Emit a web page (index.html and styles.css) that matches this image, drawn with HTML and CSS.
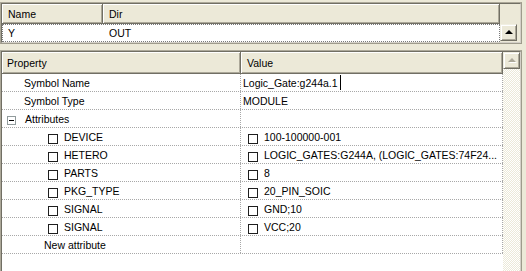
FILE: index.html
```html
<!DOCTYPE html>
<html>
<head>
<meta charset="utf-8">
<link rel="stylesheet" href="styles.css">
</head>
<body>
<div class="panel top">
  <div class="panel-in">
    <div class="list">
      <div class="hdr">
        <div class="hc name-col">Name</div>
        <div class="hc dir-col">Dir</div>
      </div>
      <div class="trow focus">
        <div class="name-col cell">Y</div>
        <div class="cell">OUT</div>
      </div>
    </div>
    <div class="vscroll short">
      <div class="sbtn"><span class="tri"></span></div>
    </div>
  </div>
</div>

<div class="panel bottom">
  <div class="panel-in">
    <div class="list">
      <div class="hdr tall">
        <div class="hc prop-col">Property</div>
        <div class="hc val-col">Value</div>
      </div>
      <div class="r">
        <div class="p ind1">Symbol Name</div>
        <div class="v edit">Logic_Gate:g244a.1<span class="caret"></span></div>
      </div>
      <div class="r">
        <div class="p ind1">Symbol Type</div>
        <div class="v">MODULE</div>
      </div>
      <div class="r">
        <div class="p ind0"><span class="minus"></span>Attributes</div>
        <div class="v"></div>
      </div>
      <div class="r">
        <div class="p ind2"><span class="chk"></span>DEVICE</div>
        <div class="v vchk"><span class="chk"></span>100-100000-001</div>
      </div>
      <div class="r">
        <div class="p ind2"><span class="chk"></span>HETERO</div>
        <div class="v vchk"><span class="chk"></span>LOGIC_GATES:G244A, (LOGIC_GATES:74F24...</div>
      </div>
      <div class="r">
        <div class="p ind2"><span class="chk"></span>PARTS</div>
        <div class="v vchk"><span class="chk"></span>8</div>
      </div>
      <div class="r">
        <div class="p ind2"><span class="chk"></span>PKG_TYPE</div>
        <div class="v vchk"><span class="chk"></span>20_PIN_SOIC</div>
      </div>
      <div class="r">
        <div class="p ind2"><span class="chk"></span>SIGNAL</div>
        <div class="v vchk"><span class="chk"></span>GND;10</div>
      </div>
      <div class="r">
        <div class="p ind2"><span class="chk"></span>SIGNAL</div>
        <div class="v vchk"><span class="chk"></span>VCC;20</div>
      </div>
      <div class="r">
        <div class="p ind3">New attribute</div>
        <div class="v"></div>
      </div>
    </div>
    <div class="vscroll track">
      <div class="sbtn dis"><span class="tri"></span></div>
    </div>
  </div>
</div>
</body>
</html>
```

FILE: styles.css
```css
* { box-sizing: border-box; }

html, body { overflow: hidden; }

body {
  margin: 0;
  padding-top: 2px;
  background: #ECE9D8;
  font: 10.5px "Liberation Sans", Arial, sans-serif;
  color: #000;
  height: 271px;
}

.panel {
  width: 522px;
  border: 1px solid;
  border-color: #ACA899 #9E9B8C #9E9B8C #ACA899;
}

.panel-in {
  display: flex;
  height: 100%;
  border: 1px solid;
  border-color: #716F64 #D4D0C8 #D4D0C8 #716F64;
}

.top { height: 42px; }
.bottom { margin-top: 6px; height: 221px; border-bottom: 0; }
.bottom .panel-in { border-bottom: 0; }

.list {
  flex: 1;
  background: #fff;
  display: flex;
  flex-direction: column;
}

.top .list { background: #ECE9D8; }

.hdr {
  display: flex;
  height: 20px;
  background: #ECE9D8;
  flex: none;
}
.hdr.tall { height: 22px; }

.hc {
  display: flex;
  align-items: center;
  padding-left: 6px;
  background: #ECE9D8;
  border-right: 1px solid #716F64;
  border-bottom: 1px solid #716F64;
  box-shadow: inset 1px 1px 0 #fff, inset -1px -1px 0 #ACA899;
}

.name-col { width: 101px; }
.dir-col { flex: 1; }
.prop-col { width: 239px; padding-left: 5px; }
.val-col { flex: 1; }

.trow {
  display: flex;
  height: 18px;
  background: #fff;
  align-items: center;
}
.trow.focus { outline: 1px dotted #7A7A7A; outline-offset: -1px; }
.cell { padding-left: 6px; }
.trow .cell:last-child { flex: 1; }

.vscroll {
  width: 17px;
  flex: none;
  display: flex;
  flex-direction: column;
}
.vscroll.short {
  width: 20px;
  padding-right: 3px;
  justify-content: flex-end;
  padding-bottom: 1px;
}
.vscroll.track {
  background: repeating-conic-gradient(#fff 0 25%, #ECE9D8 0 50%) 0 0 / 2px 2px;
}

.sbtn {
  width: 17px;
  height: 17px;
  background: #ECE9D8;
  border: 1px solid;
  border-color: #F1EFE2 #716F64 #716F64 #F1EFE2;
  box-shadow: inset 1px 1px 0 #fff, inset -1px -1px 0 #ACA899;
  display: flex;
  align-items: center;
  justify-content: center;
}

.tri {
  width: 0;
  height: 0;
  border-left: 4px solid transparent;
  border-right: 4px solid transparent;
  border-bottom: 4px solid #000;
  margin-top: -1px;
}
.dis .tri {
  border-bottom-color: #ACA899;
  filter: drop-shadow(1px 1px 0 #fff);
}

.r {
  display: flex;
  height: 18px;
  border-bottom: 1px dotted #A8A8A8;
  flex: none;
}

.p, .v {
  display: flex;
  align-items: center;
  white-space: nowrap;
  overflow: hidden;
}
.p {
  width: 239px;
  border-right: 1px dotted #A8A8A8;
}
.v {
  flex: 1;
  padding-left: 2px;
  border-right: 1px dotted #A8A8A8;
}
.v.vchk { padding-left: 7px; }

.ind0 { padding-left: 5px; }
.ind1 { padding-left: 22px; }
.ind2 { padding-left: 46px; }
.ind3 { padding-left: 42px; }

.chk {
  width: 10px;
  height: 10px;
  border: 1px solid #1E1E1E;
  background: #fff;
  margin-top: 4px;
  margin-right: 6px;
  flex: none;
}

.minus {
  width: 9px;
  height: 9px;
  border: 1px solid #919B9C;
  background: #fff;
  margin-top: 4px;
  margin-right: 9px;
  flex: none;
  display: flex;
  align-items: center;
  justify-content: center;
}
.minus::before {
  content: "";
  width: 5px;
  height: 1px;
  background: #000;
}

.caret {
  display: inline-block;
  width: 1px;
  height: 15px;
  background: #000;
  margin-left: 2px;
}
```
